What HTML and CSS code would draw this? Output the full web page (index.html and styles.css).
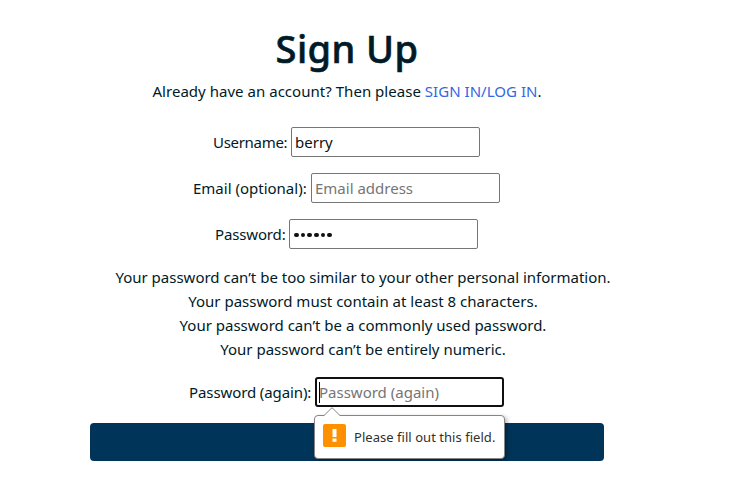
FILE: index.html
```html
<!DOCTYPE html>
<html lang="en">
<head>
<meta charset="utf-8">
<title>Sign Up</title>
<link rel="stylesheet" href="styles.css">
</head>
<body>
<main class="signup">
  <h1>Sign Up</h1>
  <p class="intro">Already have an account? Then please <a href="#">SIGN IN/LOG IN</a>.</p>
  <form>
    <div class="field"><label class="l-user" for="user">Username:</label><input id="user" type="text" value="berry"></div>
    <div class="field"><label class="l-email" for="email">Email (optional):</label><input id="email" type="text" placeholder="Email address"></div>
    <div class="field"><label class="l-pass">Password:</label><div class="box dots"><i></i><i></i><i></i><i></i><i></i><i></i></div></div>
    <ul class="hints">
      <li>Your password can’t be too similar to your other personal information.</li>
      <li>Your password must contain at least 8 characters.</li>
      <li>Your password can’t be a commonly used password.</li>
      <li>Your password can’t be entirely numeric.</li>
    </ul>
    <div class="field"><label class="l-again">Password (again):</label>
      <div class="box focused"><span class="caret"></span><span class="placeholder">Password (again)</span>
        <div class="bubble">
          <svg class="arrow" width="18" height="10" viewBox="0 0 18 10"><path d="M0 10V8.500H1L9 .7l8 7.800h1V10z" fill="#fff"/><path d="M0 8.500H1L9 .7l8 7.800h1" fill="none" stroke="#858585"/></svg>
          <svg class="warn" width="23" height="23" viewBox="0 0 23 23"><rect width="23" height="23" rx="2" fill="#ff9000"/><path d="M9.500 5h4v8h-4zM9.500 14.500h4v3.300h-4z" fill="#fff"/></svg>
          <span>Please fill out this field.</span>
        </div>
      </div>
    </div>
    <button type="button" aria-label="Sign Up"></button>
  </form>
</main>
</body>
</html>
```
FILE: styles.css
```css
* { box-sizing: border-box; }
body {
  margin: 0;
  background: #fff;
  color: #001a27;
  font: 15px/24px "Noto Sans", "Open Sans", sans-serif;
}
.signup { width: 514px; margin-left: 90px; padding-top: 24px; text-align: center; }
h1 { margin: 0 0 7px; font-size: 38px; line-height: 48px; font-weight: 500; letter-spacing: .4px; -webkit-text-stroke: .6px #001a27; white-space: nowrap; }
.intro { margin: 0 0 24px; white-space: nowrap; letter-spacing: .03px; }
a { color: #3366e2; text-decoration: none; }
.field { display: flex; justify-content: center; gap: 4px; height: 30px; margin: 0 1px 16px 0; line-height: 30px; }
label { white-space: nowrap; text-align: left; }
.l-user { width: 74px; letter-spacing: -.3px; }
.l-email { width: 114px; }
.l-pass { width: 70px; letter-spacing: -.15px; }
.l-again { width: 122px; letter-spacing: -.1px; }
input, .box {
  width: 189px;
  height: 30px;
  border: 1px solid #767676;
  border-radius: 2px;
  padding: 1px 3px;
  background: #fff;
  color: #111;
  font: inherit;
  line-height: 28px;
}
input::placeholder, .placeholder { color: #757575; opacity: 1; }
.dots { display: flex; align-items: center; gap: 2px; padding: 2px 3px 0 4px; }
.dots i { width: 4.700px; height: 4.700px; border-radius: 50%; background: #111; }
.hints { list-style: none; margin: 0 -7px 16px 25px; padding: 0; white-space: nowrap; }
.box.focused { position: relative; display: flex; align-items: center; border: 2px solid #101010; border-radius: 3px; padding: 0 2px; }
.caret { width: 1px; height: 21px; margin-right: -1px; background: #000; }
.bubble {
  position: absolute;
  z-index: 1;
  top: 36px;
  left: -3px;
  width: 191px;
  height: 44px;
  display: flex;
  align-items: center;
  gap: 8px;
  padding: 0 8px;
  border: 1px solid #858585;
  border-radius: 4px;
  background: #fff;
  color: #303030;
  font-size: 13px;
  letter-spacing: .04px;
  white-space: nowrap;
  box-shadow: 2px 2px 4px rgba(0, 0, 0, .3);
}
.arrow { position: absolute; top: -9px; left: 8px; }
.warn { flex: none; margin-top: -3px; }
button { display: block; width: 100%; height: 38px; border: 0; border-radius: 4px; background: #003459; }
```
